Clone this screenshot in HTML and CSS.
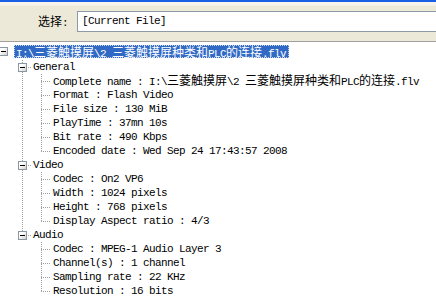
FILE: index.html
```html
<!DOCTYPE html>
<html lang="zh">
  <head>
    <meta charset="utf-8" />
    <title>MediaInfo</title>
    <link rel="stylesheet" href="styles.css">
  </head>
  <body>
    <div class="toolbar">
      <span class="pick-label"><span class="cjk">选择</span>:</span>
      <div class="pick-input">[Current File]</div>
    </div>

    <div class="tree">
      <div class="row root">
        <span class="cell"><span class="toggle"></span></span>
        <span class="label selected">I:\<span class="cjk">三菱触摸屏</span>\2 <span class="cjk">三菱触摸屏种类和</span>PLC<span class="cjk">的连接</span>.flv</span>
      </div>

      <!-- General -->
      <div class="row group">
        <span class="cell"></span><span class="cell tee"><span class="toggle"></span></span>
        <span class="label">General</span>
      </div>
      <div class="row leaf">
        <span class="cell"></span><span class="cell pipe"></span><span class="cell tee"></span>
        <span class="label">Complete name : I:\<span class="cjk">三菱触摸屏</span>\2 <span class="cjk">三菱触摸屏种类和</span>PLC<span class="cjk">的连接</span>.flv</span>
      </div>
      <div class="row leaf">
        <span class="cell"></span><span class="cell pipe"></span><span class="cell tee"></span>
        <span class="label">Format : Flash Video</span>
      </div>
      <div class="row leaf">
        <span class="cell"></span><span class="cell pipe"></span><span class="cell tee"></span>
        <span class="label">File size : 130 MiB</span>
      </div>
      <div class="row leaf">
        <span class="cell"></span><span class="cell pipe"></span><span class="cell tee"></span>
        <span class="label">PlayTime : 37mn 10s</span>
      </div>
      <div class="row leaf">
        <span class="cell"></span><span class="cell pipe"></span><span class="cell tee"></span>
        <span class="label">Bit rate : 490 Kbps</span>
      </div>
      <div class="row leaf">
        <span class="cell"></span><span class="cell pipe"></span><span class="cell elbow"></span>
        <span class="label">Encoded date : Wed Sep 24 17:43:57 2008</span>
      </div>

      <!-- Video -->
      <div class="row group">
        <span class="cell"></span><span class="cell tee"><span class="toggle"></span></span>
        <span class="label">Video</span>
      </div>
      <div class="row leaf">
        <span class="cell"></span><span class="cell pipe"></span><span class="cell tee"></span>
        <span class="label">Codec : On2 VP6</span>
      </div>
      <div class="row leaf">
        <span class="cell"></span><span class="cell pipe"></span><span class="cell tee"></span>
        <span class="label">Width : 1024 pixels</span>
      </div>
      <div class="row leaf">
        <span class="cell"></span><span class="cell pipe"></span><span class="cell tee"></span>
        <span class="label">Height : 768 pixels</span>
      </div>
      <div class="row leaf">
        <span class="cell"></span><span class="cell pipe"></span><span class="cell elbow"></span>
        <span class="label">Display Aspect ratio : 4/3</span>
      </div>

      <!-- Audio -->
      <div class="row group">
        <span class="cell"></span><span class="cell elbow"><span class="toggle"></span></span>
        <span class="label">Audio</span>
      </div>
      <div class="row leaf">
        <span class="cell"></span><span class="cell"></span><span class="cell tee"></span>
        <span class="label">Codec : MPEG-1 Audio Layer 3</span>
      </div>
      <div class="row leaf">
        <span class="cell"></span><span class="cell"></span><span class="cell tee"></span>
        <span class="label">Channel(s) : 1 channel</span>
      </div>
      <div class="row leaf">
        <span class="cell"></span><span class="cell"></span><span class="cell tee"></span>
        <span class="label">Sampling rate : 22 KHz</span>
      </div>
      <div class="row leaf">
        <span class="cell"></span><span class="cell"></span><span class="cell elbow"></span>
        <span class="label">Resolution : 16 bits</span>
      </div>
    </div>
  </body>
</html>
```

FILE: styles.css
```css
:root {
  --face: #ece9d8;
  --line: #a0a0a0;
  --select: #316ac5;
  --font-latin: "Liberation Mono", monospace;
  --font-cjk: "Noto Sans CJK SC", sans-serif;
  --vdots: repeating-linear-gradient(to bottom, var(--line) 0 1px, transparent 1px 2px);
  --hdots: repeating-linear-gradient(to right, var(--line) 0 1px, transparent 1px 2px);
}

*,
*::before,
*::after {
  margin: 0;
  padding: 0;
  box-sizing: border-box;
}

html,
body {
  height: 100%;
  overflow: hidden;
  background: #fff;
  color: #000;
  font-family: var(--font-latin);
  font-size: 11px;
  letter-spacing: -0.6px;
}

.cjk {
  font-family: var(--font-cjk);
  font-size: 12px;
  letter-spacing: 0;
}

/* top bar with the file picker */
.toolbar {
  display: flex;
  align-items: center;
  height: 42px;
  padding: 8px 0 8px 38px;
  border-top: 2px solid #1a5fe3;
  border-bottom: 1px solid var(--line);
  background: linear-gradient(to bottom, #f6f4ec 0, #f6f4ec 3px, var(--face) 4px);
  overflow: hidden;
}

.pick-label {
  width: 39px;
  flex: none;
  line-height: 14px;
}

.pick-input {
  flex: none;
  width: 400px;
  height: 21px;
  padding-left: 4px;
  line-height: 19px;
  border: 1px solid #8d99a6;
  border-right: none;
  background: #fff;
}

/* tree view */
.tree {
  margin-left: -6px;
}

.row {
  display: flex;
  align-items: center;
  height: 14px;
  white-space: nowrap;
}

.row.root {
  height: 18px;
}

.cell {
  flex: none;
  width: 19px;
  height: 100%;
  display: flex;
  align-items: center;
}

.pipe {
  background: var(--vdots) 9px 0 / 1px 100% no-repeat;
}

.tee {
  background:
    var(--vdots) 9px 0 / 1px 100% no-repeat,
    var(--hdots) 9px 7px / 10px 1px no-repeat;
}

.elbow {
  background:
    var(--vdots) 9px 0 / 1px 8px no-repeat,
    var(--hdots) 9px 7px / 10px 1px no-repeat;
}

.toggle {
  display: flex;
  align-items: center;
  justify-content: center;
  width: 9px;
  height: 9px;
  margin-left: 5px;
  border: 1px solid #8a97a5;
  background: linear-gradient(135deg, #ffffff 30%, #d6d2c6);
}

.toggle::before {
  content: "";
  width: 5px;
  height: 1px;
  background: #000;
}

.label {
  line-height: 14px;
}

.group .label {
  padding-left: 1px;
}

.leaf .label {
  padding-left: 2px;
}

.label.selected {
  margin-left: 1px;
  height: 13px;
  padding: 0 2px 0 1px;
  line-height: 12px;
  border: 1px dotted #c9d6ee;
  background: var(--select);
  color: #fff;
}
```
